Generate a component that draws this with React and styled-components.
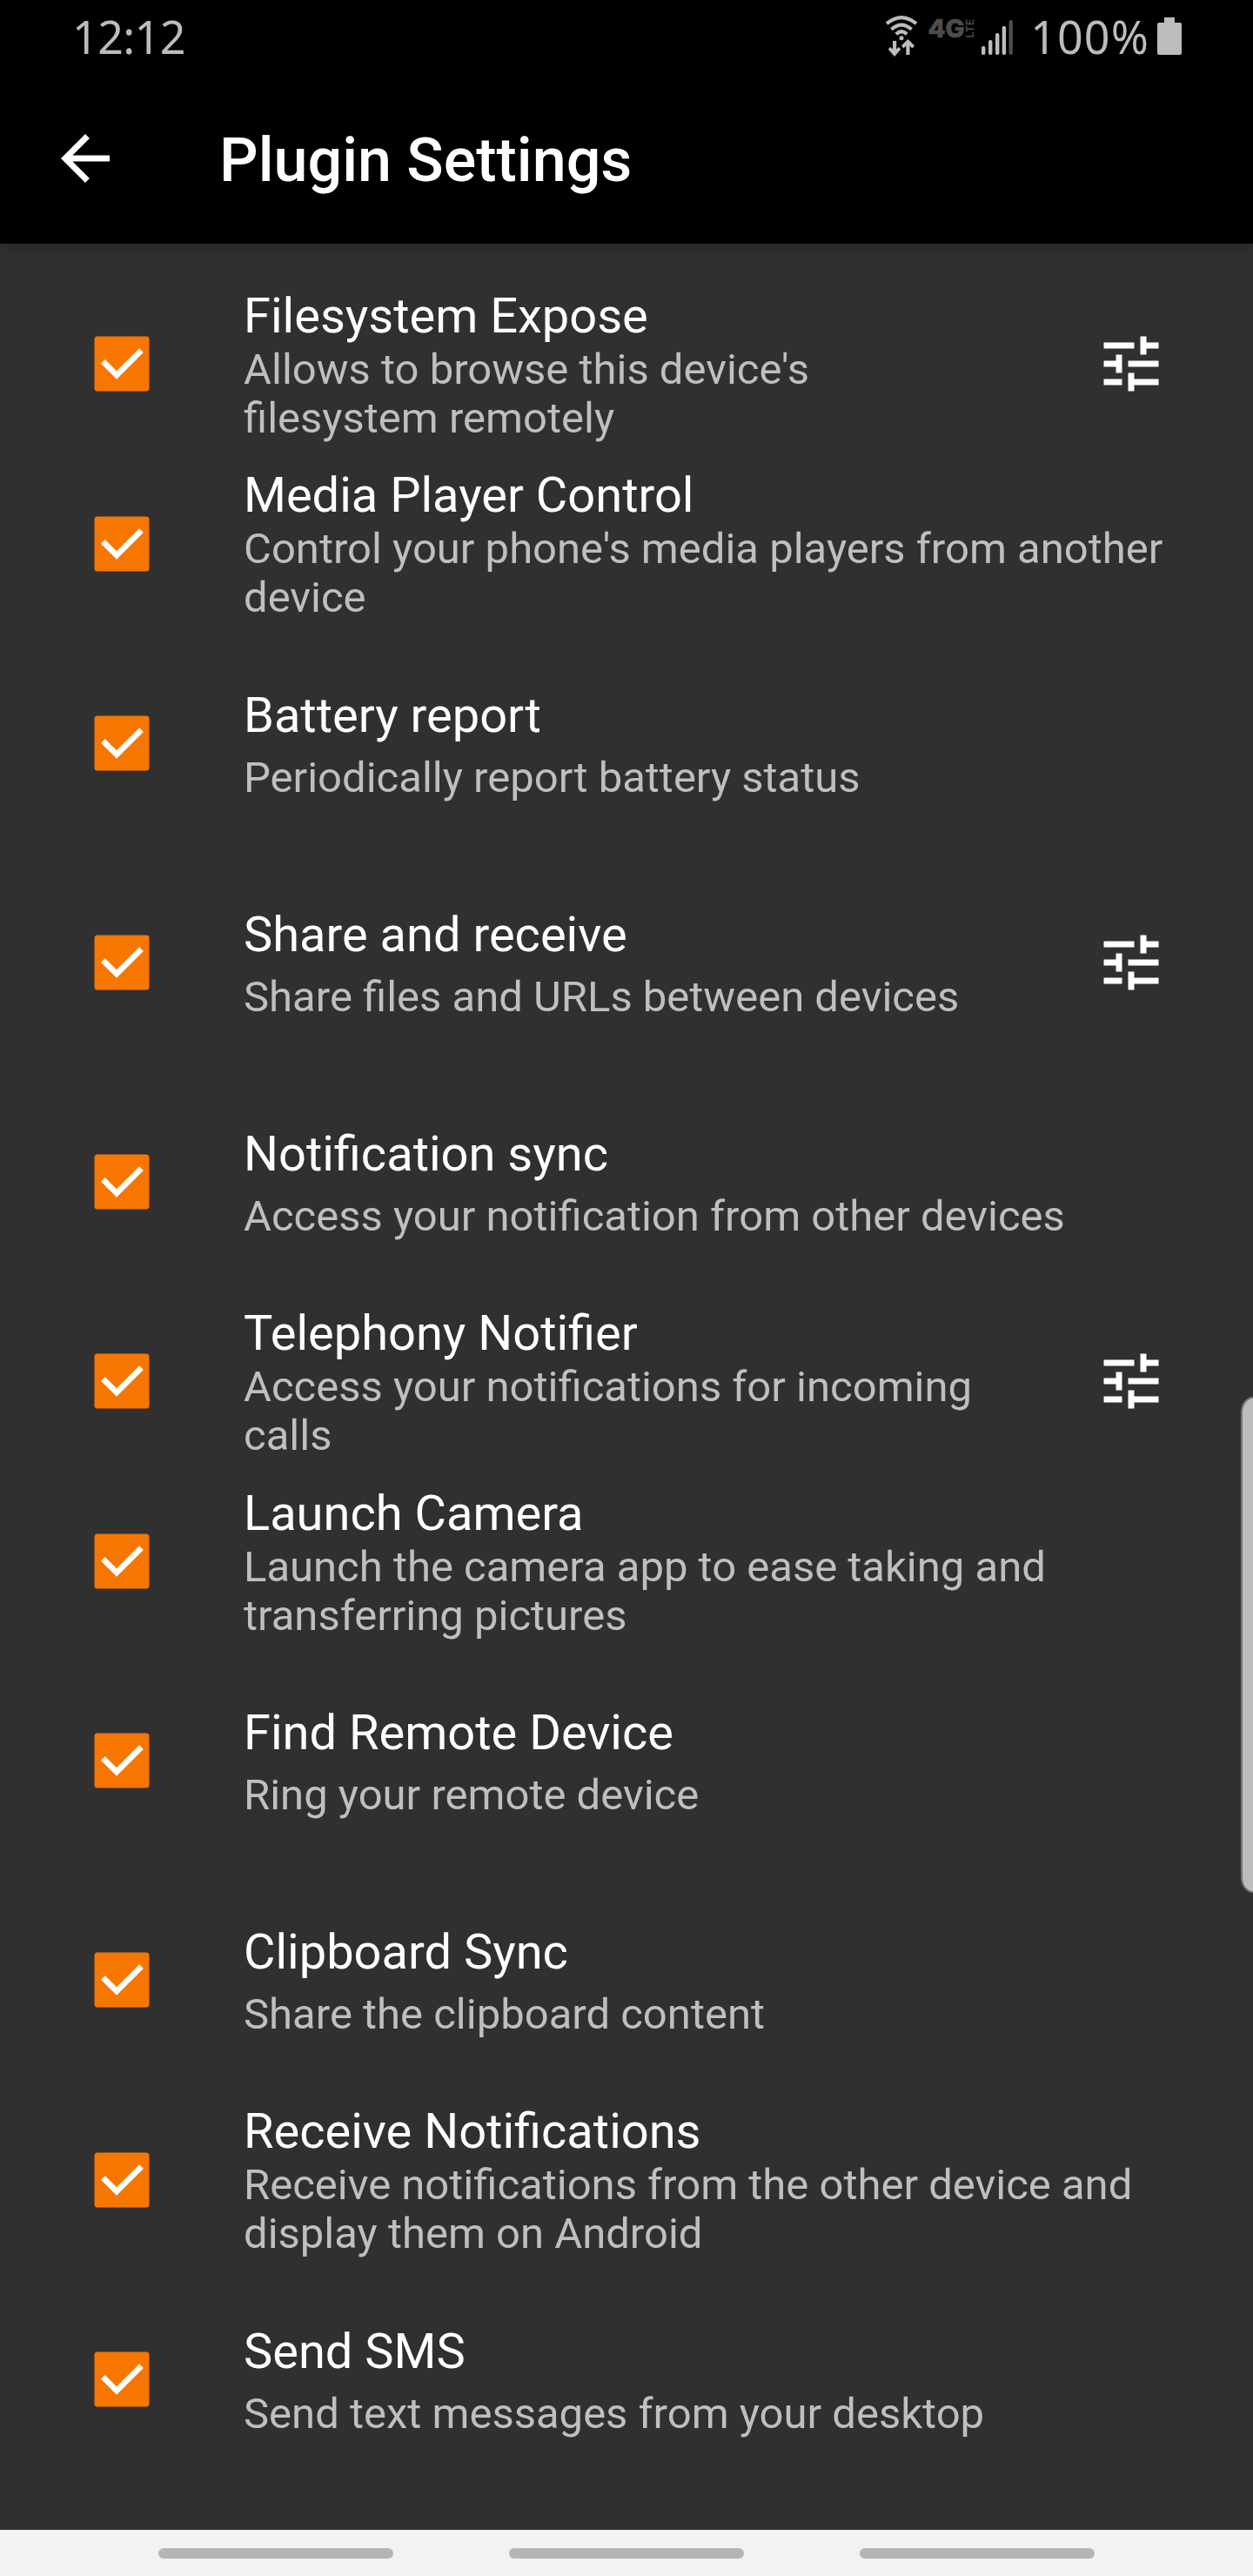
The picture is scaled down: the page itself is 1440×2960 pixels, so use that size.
import React from "react";
import styled, { createGlobalStyle } from "styled-components";

const GlobalStyle = createGlobalStyle`
  body {
    margin: 0;
    background: #303030;
    font-family: Roboto, "Noto Sans", sans-serif;
  }
`;

const Screen = styled.div`
  position: relative;
  display: flex;
  flex-direction: column;
  width: 1440px;
  height: 2960px;
  background: #303030;
  overflow: hidden;
`;

const Header = styled.header`
  height: 280px;
  flex: none;
  background: #000;
  color: #fff;
  box-shadow: 0 2px 14px rgba(0, 0, 0, 0.25);
`;

const StatusBar = styled.div`
  box-sizing: border-box;
  display: flex;
  align-items: center;
  height: 84px;
  padding: 0 82px 0 83px;
  color: #bcbcbc;
  font: 400 52px/80px "Noto Sans", sans-serif;
`;

const Clock = styled.span`
  flex: 1;
  letter-spacing: -0.6px;
`;

const Network = styled.svg`
  width: 152px;
  height: 50px;
  margin: 0 16.6px 2px 0;
`;

const Percent = styled.span`
  letter-spacing: 1.1px;
`;

const Battery = styled.svg`
  width: 28px;
  height: 43px;
  margin: 0 0 1px 9px;
`;

const Toolbar = styled.div`
  display: flex;
  align-items: center;
  height: 196px;
  padding: 0 56px;
`;

const BackIcon = styled.svg`
  width: 84px;
  height: 84px;
  fill: #fff;
`;

const Title = styled.h1`
  margin: 4px 0 0 112px;
  font-size: 70px;
  line-height: 82px;
  font-weight: 500;
`;

const List = styled.main`
  flex: 1;
  padding-top: 35px;
`;

const Row = styled.div`
  box-sizing: border-box;
  display: flex;
  align-items: center;
  height: ${(p) => (p.$tall ? 206.6 : 252)}px;
  padding: 0 98px;
`;

const CheckIcon = styled.svg`
  width: 84px;
  height: 84px;
  flex: none;
  margin-right: 98px;
`;

const Copy = styled.div`
  flex: 1;
  display: flex;
  flex-direction: column;
  gap: ${(p) => (p.$tall ? 1 : 11)}px;
  padding-top: ${(p) => (p.$tall ? 2 : 3)}px;
`;

const Name = styled.div`
  color: #fff;
  font-size: 56px;
  line-height: 66px;
  white-space: nowrap;
`;

const Summary = styled.div`
  color: #bfbfbf;
  font-size: 49px;
  line-height: 56px;
  white-space: pre;
`;

const TuneIcon = styled.svg`
  width: 84px;
  height: 84px;
  flex: none;
  fill: #fff;
`;

const EdgeHandle = styled.div`
  position: absolute;
  box-sizing: border-box;
  top: 1605px;
  right: 0;
  width: 14px;
  height: 570px;
  background: #bcbcbc;
  border: 2px solid #757575;
  border-right: 0;
  border-radius: 14px 0 0 14px / 18px 0 0 18px;
`;

const NavBar = styled.nav`
  box-sizing: border-box;
  flex: none;
  display: flex;
  justify-content: space-between;
  height: 53px;
  padding: 21px 182px 0;
  background: #f2f2f2;
`;

const NavPill = styled.span`
  width: 270px;
  height: 12px;
  border-radius: 6px;
  background: #b5b5b5;
`;

const plugins = [
  { name: "Filesystem Expose", lines: ["Allows to browse this device's", "filesystem remotely"], tune: true },
  { name: "Media Player Control", lines: ["Control your phone's media players from another", "device"] },
  { name: "Battery report", lines: ["Periodically report battery status"] },
  { name: "Share and receive", lines: ["Share files and URLs between devices"], tune: true },
  { name: "Notification sync", lines: ["Access your notification from other devices"] },
  { name: "Telephony Notifier", lines: ["Access your notifications for incoming", "calls"], tune: true },
  { name: "Launch Camera", lines: ["Launch the camera app to ease taking and", "transferring pictures"] },
  { name: "Find Remote Device", lines: ["Ring your remote device"] },
  { name: "Clipboard Sync", lines: ["Share the clipboard content"] },
  { name: "Receive Notifications", lines: ["Receive notifications from the other device and", "display them on Android"] },
  { name: "Send SMS", lines: ["Send text messages from your desktop"] },
];

function NetworkIcons() {
  return (
    <Network viewBox="1014 16 152 50">
      <g fill="none" stroke="#bcbcbc" strokeWidth="4.2">
        <path d="M1017 27.2Q1034 13 1051 27.2" />
        <path d="M1022.5 33.8Q1034 23.5 1045.500 33.8" />
        <path d="M1027.800 39.200Q1034 33.2 1040.200 39.200" />
      </g>
      <g fill="#bcbcbc">
        <circle cx="1034" cy="43.800" r="2.500" />
        <path d="M1024 47h4.200v9.600l2.800-2.600 2.200 2.800-7.200 8.200-7.200-8.200 2.200-2.800 3 2.600z" />
        <path d="M1039.300 63h4.200v-10.200l3 2.700 2.500-2.900-7.600-7.600-7.400 7.600 2.300 2.900 3-2.700z" />
        <rect x="1126" y="53" width="4.400" height="10" rx="2" />
        <rect x="1134" y="46" width="4.400" height="17" rx="2" />
        <rect x="1142" y="38" width="4.400" height="25" rx="2" />
        <rect x="1149.700" y="30" width="4.400" height="33" rx="2" />
      </g>
      <rect x="1157.500" y="23" width="4.400" height="40" rx="2" fill="#4d4d4d" />
      <g fill="#4d4d4d" fontFamily="Inter, sans-serif">
        <text x="1064.500" y="43" fontSize="28.500" fontWeight="800" textLength="42" lengthAdjust="spacingAndGlyphs" stroke="#4d4d4d" strokeWidth="0.700">4G</text>
        <text transform="translate(1116.500 43.500) rotate(-90)" fontSize="12" fontWeight="600" textLength="22" lengthAdjust="spacingAndGlyphs">LTE</text>
      </g>
    </Network>
  );
}

function Plugin({ name, lines, tune }) {
  const tall = lines.length > 1;
  return (
    <Row $tall={tall}>
      <CheckIcon viewBox="0 0 24 24">
        <rect x="3" y="3" width="18" height="18" rx="1" fill="#f77600" />
        <path d="M10.300 17.050L5.150 11.950l1.350-1.350 3.800 3.750 7.450-7.450 1.350 1.350z" fill="#fff" />
      </CheckIcon>
      <Copy $tall={tall}>
        <Name>{name}</Name>
        <Summary>{lines.join("\n")}</Summary>
      </Copy>
      {tune && (
        <TuneIcon viewBox="0 0 24 24">
          <path d="M3 17v2h6v-2H3zM3 5v2h10V5H3zm10 16v-2h8v-2h-8v-2h-2v6h2zM7 9v2H3v2h4v2h2V9H7zm14 4v-2H11v2h10zm-6-4h2V7h4V5h-4V3h-2v6z" />
        </TuneIcon>
      )}
    </Row>
  );
}

export default function App() {
  return (
    <Screen>
      <GlobalStyle />
      <Header>
        <StatusBar>
          <Clock>12:12</Clock>
          <NetworkIcons />
          <Percent>100%</Percent>
          <Battery viewBox="0 0 28 43">
            <path d="M8 0h12v6h6q2 0 2 2v33q0 2-2 2H2q-2 0-2-2V8q0-2 2-2h6z" fill="#bcbcbc" />
          </Battery>
        </StatusBar>
        <Toolbar>
          <BackIcon viewBox="0 0 24 24">
            <path d="M20 11H7.830l5.590-5.590L12 4l-8 8 8 8 1.410-1.410L7.830 13H20v-2z" />
          </BackIcon>
          <Title>Plugin Settings</Title>
        </Toolbar>
      </Header>
      <List>
        {plugins.map((plugin) => (
          <Plugin key={plugin.name} {...plugin} />
        ))}
      </List>
      <EdgeHandle />
      <NavBar>
        <NavPill />
        <NavPill />
        <NavPill />
      </NavBar>
    </Screen>
  );
}
